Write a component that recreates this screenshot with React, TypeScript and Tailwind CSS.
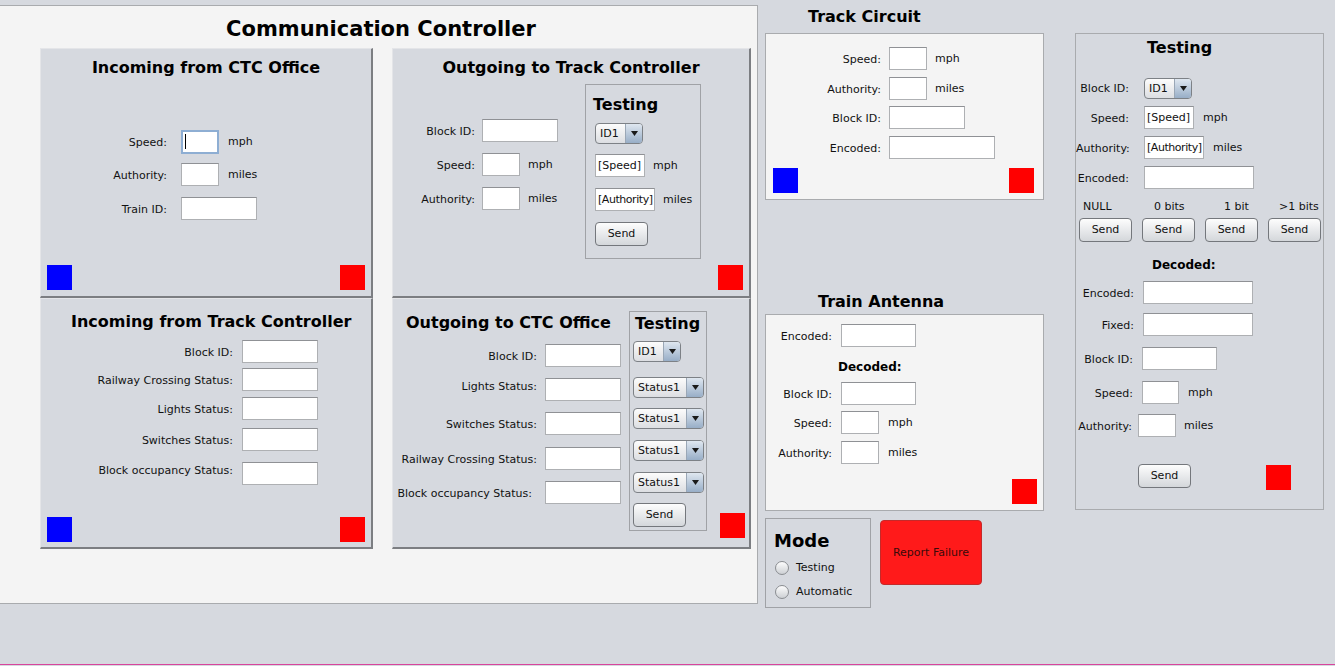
import React from "react";

const TITLE = "font-bold text-[16px] leading-[20px] text-black";
const BEVEL =
  "bg-[#d6d9df] border-t border-l border-t-[#e4e5e8] border-l-[#e4e5e8] border-r-2 border-b-2 border-r-[#7c7e82] border-b-[#7c7e82] flex";

function TextBox({ className = "", children }: { className?: string; children?: React.ReactNode }) {
  return (
    <div
      className={`h-[23px] shrink-0 bg-white border border-[#aeb0b3] border-t-[#8f9195] flex items-center pl-[2px] text-[11px] text-[#111] overflow-hidden whitespace-nowrap ${className}`}
    >
      {children}
    </div>
  );
}

function Focused({ className = "" }: { className?: string }) {
  return (
    <div className={`h-[24px] shrink-0 bg-white border-2 border-[#8eaed3] flex items-center pl-[2px] ${className}`}>
      <div className="w-[1px] h-[15px] bg-black" />
    </div>
  );
}

function Field({
  className = "",
  labelW,
  label,
  inputCls,
  unit,
  unitCls = "",
  value,
  labelCls = "",
  focused = false,
}: {
  className?: string;
  labelW: string;
  label: string;
  inputCls: string;
  unit?: string;
  unitCls?: string;
  value?: React.ReactNode;
  labelCls?: string;
  focused?: boolean;
}) {
  return (
    <div className={`flex items-center h-[23px] shrink-0 ${className}`}>
      <div className={`${labelW} shrink-0 text-right whitespace-nowrap leading-[15px] pt-[1px] ${labelCls}`}>{label}</div>
      {focused ? <Focused className={inputCls} /> : <TextBox className={inputCls}>{value}</TextBox>}
      {unit && <span className={`whitespace-nowrap pt-[1px] ${unitCls}`}>{unit}</span>}
    </div>
  );
}

function Combo({ className = "", label }: { className?: string; label: string }) {
  return (
    <div
      className={`h-[21px] shrink-0 flex rounded-[4px] border border-[#7d8186] overflow-hidden bg-linear-to-b from-[#fcfcfc] to-[#dcdee2] ${className}`}
    >
      <div className="flex-1 flex items-center pl-[4px] text-[11px] whitespace-nowrap">{label}</div>
      <div className="w-[17px] border-l border-[#9aa7b6] bg-linear-to-b from-[#dfe7f0] to-[#98aec7] flex items-center justify-center">
        <svg width="7" height="5" viewBox="0 0 7 5">
          <path d="M0 0h7L3.5 5z" fill="#1a1a1a" />
        </svg>
      </div>
    </div>
  );
}

function Btn({ className = "" }: { className?: string }) {
  return (
    <div
      className={`w-[53px] h-[24px] shrink-0 rounded-[4px] border border-[#74777c] bg-linear-to-b from-[#fdfdfd] to-[#d4d7db] flex items-center justify-center text-[11px] text-[#111] ${className}`}
    >
      Send
    </div>
  );
}

function Sq({ blue = false, className = "" }: { blue?: boolean; className?: string }) {
  return <div className={`w-[25px] h-[25px] shrink-0 ${blue ? "bg-[#0000ff]" : "bg-[#ff0000]"} ${className}`} />;
}

function Radio({ label, className = "" }: { label: string; className?: string }) {
  return (
    <div className={`flex items-center h-[14px] pl-[9px] ${className}`}>
      <div className="w-[14px] h-[14px] rounded-full border border-[#8a8d91] bg-linear-to-b from-[#fdfdfd] to-[#cdd0d4]" />
      <span className="ml-[7px] text-[11px]">{label}</span>
    </div>
  );
}

const AUTH = <span className="tracking-[-0.45px]">[Authority]</span>;

function MainPanel() {
  return (
    <div className="mt-[5px] w-[758px] h-[599px] shrink-0 bg-[#f4f4f4] border-t border-r border-b border-[#a9abae] flex flex-col">
      <div className="pt-[10px] pl-[5px] text-center font-bold text-[21px] leading-[26px] text-black">
        Communication Controller
      </div>
      <div className="mt-[6px] ml-[40px] grid grid-cols-[333px_359px] grid-rows-[250px_251px] gap-x-[19px]">
        {/* Incoming from CTC Office */}
        <div className={`${BEVEL} flex-col`}>
          <div className={`pt-[9px] text-center ${TITLE}`}>Incoming from CTC Office</div>
          <Field className="mt-[52px]" labelW="w-[126px]" label="Speed:" inputCls="ml-[14px] w-[38px]" focused unit="mph" unitCls="ml-[9px]" />
          <Field className="mt-[10px]" labelW="w-[126px]" label="Authority:" inputCls="ml-[14px] w-[38px]" unit="miles" unitCls="ml-[9px]" />
          <Field className="mt-[11px]" labelW="w-[126px]" label="Train ID:" inputCls="ml-[14px] w-[76px]" />
          <div className="mt-auto flex justify-between px-[6px] pb-[6px]">
            <Sq blue />
            <Sq />
          </div>
        </div>

        {/* Outgoing to Track Controller */}
        <div className={`${BEVEL} flex-col`}>
          <div className={`pt-[9px] text-center ${TITLE}`}>Outgoing to Track Controller</div>
          <div className="mt-[6px] flex items-start">
            <div className="w-[192px] shrink-0 flex flex-col">
              <Field className="mt-[35px]" labelW="w-[82px]" label="Block ID:" inputCls="ml-[7px] w-[76px]" />
              <Field className="mt-[11px]" labelW="w-[82px]" label="Speed:" inputCls="ml-[7px] w-[38px]" unit="mph" unitCls="ml-[8px]" />
              <Field className="mt-[11px]" labelW="w-[82px]" label="Authority:" inputCls="ml-[7px] w-[38px]" unit="miles" unitCls="ml-[8px]" />
            </div>
            <div className="w-[116px] h-[175px] shrink-0 border border-[#a0a2a6] flex flex-col">
              <div className={`mt-[10px] pl-[7px] ${TITLE}`}>Testing</div>
              <Combo className="mt-[8px] ml-[9px] w-[48px]" label="ID1" />
              <div className="mt-[10px] ml-[9px] flex items-center">
                <TextBox className="w-[50px]">[Speed]</TextBox>
                <span className="ml-[8px] pt-[1px]">mph</span>
              </div>
              <div className="mt-[11px] ml-[9px] flex items-center">
                <TextBox className="w-[60px] pl-[1px]">{AUTH}</TextBox>
                <span className="ml-[8px] pt-[1px]">miles</span>
              </div>
              <Btn className="mt-[11px] ml-[9px]" />
            </div>
          </div>
          <div className="mt-auto flex justify-end pr-[6px] pb-[6px]">
            <Sq />
          </div>
        </div>

        {/* Incoming from Track Controller */}
        <div className={`${BEVEL} flex-col`}>
          <div className={`pt-[13px] pl-[30px] ${TITLE}`}>Incoming from Track Controller</div>
          <Field className="mt-[8px]" labelW="w-[192px]" label="Block ID:" inputCls="ml-[9px] w-[76px]" />
          <Field className="mt-[5px]" labelW="w-[192px]" label="Railway Crossing Status:" inputCls="ml-[9px] w-[76px]" />
          <Field className="mt-[6px]" labelW="w-[192px]" label="Lights Status:" inputCls="ml-[9px] w-[76px]" />
          <Field className="mt-[8px]" labelW="w-[192px]" label="Switches Status:" inputCls="ml-[9px] w-[76px]" />
          <Field className="mt-[11px]" labelW="w-[192px]" label="Block occupancy Status:" labelCls="self-start" inputCls="ml-[9px] w-[76px]" />
          <div className="mt-auto flex justify-between px-[6px] pb-[5px]">
            <Sq blue />
            <Sq />
          </div>
        </div>

        {/* Outgoing to CTC Office */}
        <div className={`${BEVEL} flex-row`}>
          <div className="w-[236px] shrink-0 flex flex-col">
            <div className={`mt-[14px] pl-[13px] ${TITLE}`}>Outgoing to CTC Office</div>
            <Field className="mt-[11px]" labelW="w-[144px]" label="Block ID:" inputCls="ml-[8px] w-[76px]" />
            <Field className="mt-[11px]" labelW="w-[144px]" label="Lights Status:" labelCls="self-start" inputCls="ml-[8px] w-[76px]" />
            <Field className="mt-[11px]" labelW="w-[144px]" label="Switches Status:" inputCls="ml-[8px] w-[76px]" />
            <Field className="mt-[12px]" labelW="w-[144px]" label="Railway Crossing Status:" inputCls="ml-[8px] w-[76px]" />
            <Field className="mt-[11px]" labelW="w-[144px]" label="Block occupancy Status:" labelCls="pr-[5px]" inputCls="ml-[8px] w-[76px]" />
          </div>
          <div className="mt-[12px] w-[78px] h-[220px] shrink-0 border border-[#a0a2a6] flex flex-col">
            <div className={`mt-[2px] pl-[5px] ${TITLE}`}>Testing</div>
            <Combo className="mt-[7px] ml-[3px] w-[48px]" label="ID1" />
            <Combo className="mt-[15px] ml-[3px] w-[71px]" label="Status1" />
            <Combo className="mt-[10px] ml-[3px] w-[71px]" label="Status1" />
            <Combo className="mt-[11px] ml-[3px] w-[71px]" label="Status1" />
            <Combo className="mt-[11px] ml-[3px] w-[71px]" label="Status1" />
            <Btn className="mt-[10px] ml-[3px]" />
          </div>
          <div className="ml-[13px] self-end mb-[9px]">
            <Sq />
          </div>
        </div>
      </div>
    </div>
  );
}

function ColA() {
  return (
    <div className="ml-[7px] w-[279px] shrink-0 flex flex-col">
      <div className={`pt-[7px] pl-[43px] ${TITLE}`}>Track Circuit</div>
      <div className="mt-[6px] h-[167px] bg-[#f4f4f4] border border-[#a9abae] flex flex-col">
        <Field className="mt-[13px]" labelW="w-[115px]" label="Speed:" inputCls="ml-[8px] w-[38px]" unit="mph" unitCls="ml-[8px]" />
        <Field className="mt-[7px]" labelW="w-[115px]" label="Authority:" inputCls="ml-[8px] w-[38px]" unit="miles" unitCls="ml-[8px]" />
        <Field className="mt-[6px]" labelW="w-[115px]" label="Block ID:" inputCls="ml-[8px] w-[76px]" />
        <Field className="mt-[7px]" labelW="w-[115px]" label="Encoded:" inputCls="ml-[8px] w-[106px]" />
        <div className="mt-auto flex justify-between pl-[7px] pr-[9px] pb-[6px]">
          <Sq blue />
          <Sq />
        </div>
      </div>

      <div className={`mt-[92px] pl-[53px] ${TITLE}`}>Train Antenna</div>
      <div className="mt-[2px] h-[197px] bg-[#f4f4f4] border border-[#a9abae] flex flex-col">
        <Field className="mt-[9px]" labelW="w-[66px]" label="Encoded:" inputCls="ml-[9px] w-[75px]" />
        <div className="mt-[12px] pl-[72px] font-bold text-[12px] leading-[16px] text-black">Decoded:</div>
        <Field className="mt-[7px]" labelW="w-[66px]" label="Block ID:" inputCls="ml-[9px] w-[75px]" />
        <Field className="mt-[6px]" labelW="w-[66px]" label="Speed:" inputCls="ml-[9px] w-[38px]" unit="mph" unitCls="ml-[9px]" />
        <Field className="mt-[7px]" labelW="w-[66px]" label="Authority:" inputCls="ml-[9px] w-[38px]" unit="miles" unitCls="ml-[9px]" />
        <div className="mt-auto flex justify-end pr-[6px] pb-[6px]">
          <Sq />
        </div>
      </div>

      <div className="mt-[7px] flex items-start">
        <div className="w-[106px] h-[90px] shrink-0 border border-[#a0a2a6] flex flex-col">
          <div className="mt-[11px] pl-[8px] font-bold text-[18px] leading-[22px] text-black">Mode</div>
          <Radio className="mt-[9px]" label="Testing" />
          <Radio className="mt-[10px]" label="Automatic" />
        </div>
        <div className="ml-[9px] mt-[2px] w-[102px] h-[65px] shrink-0 rounded-[4px] bg-[#ff1a1a] border border-[#c42a2a] flex items-center justify-center text-[11px] text-[#3a0a0a]">
          Report Failure
        </div>
      </div>
    </div>
  );
}

function ColB() {
  return (
    <div className="mt-[33px] ml-[31px] w-[249px] h-[477px] shrink-0 border border-[#a9abae] flex flex-col">
      <div className={`mt-[4px] pl-[71px] ${TITLE}`}>Testing</div>
      <div className="mt-[20px] flex items-center h-[21px]">
        <div className="w-[53px] text-right whitespace-nowrap pt-[1px]">Block ID:</div>
        <Combo className="ml-[15px] w-[48px]" label="ID1" />
      </div>
      <Field className="mt-[7px]" labelW="w-[53px]" label="Speed:" inputCls="ml-[15px] w-[50px]" value="[Speed]" unit="mph" unitCls="ml-[9px]" />
      <Field className="mt-[7px]" labelW="w-[53px]" label="Authority:" inputCls="ml-[15px] w-[60px] pl-[1px]" value={AUTH} unit="miles" unitCls="ml-[9px]" />
      <Field className="mt-[7px]" labelW="w-[53px]" label="Encoded:" inputCls="ml-[15px] w-[110px]" />
      <div className="mt-[10px] flex leading-[14px] whitespace-nowrap pt-[1px]">
        <div className="w-[78px] pl-[7px]">NULL</div>
        <div className="w-[70px]">0 bits</div>
        <div className="w-[55px]">1 bit</div>
        <div>&gt;1 bits</div>
      </div>
      <div className="mt-[4px] pl-[3px] flex gap-[10px]">
        <Btn />
        <Btn />
        <Btn />
        <Btn />
      </div>
      <div className="mt-[15px] pl-[76px] font-bold text-[12px] leading-[16px] text-black">Decoded:</div>
      <Field className="mt-[8px]" labelW="w-[58px]" label="Encoded:" inputCls="ml-[9px] w-[110px]" />
      <Field className="mt-[9px]" labelW="w-[58px]" label="Fixed:" inputCls="ml-[9px] w-[110px]" />
      <Field className="mt-[11px]" labelW="w-[57px]" label="Block ID:" inputCls="ml-[9px] w-[75px]" />
      <Field className="mt-[11px]" labelW="w-[57px]" label="Speed:" inputCls="ml-[9px] w-[37px]" unit="mph" unitCls="ml-[9px]" />
      <Field className="mt-[10px]" labelW="w-[56px]" label="Authority:" inputCls="ml-[6px] w-[38px]" unit="miles" unitCls="ml-[8px]" />
      <div className="mt-[27px] flex items-start pl-[62px]">
        <Btn />
        <Sq className="ml-[75px] mt-[1px]" />
      </div>
    </div>
  );
}

export default function App() {
  return (
    <div className="w-[1335px] h-[666px] bg-[#d6d9df] overflow-hidden flex flex-col font-['DejaVu_Sans',sans-serif] text-[11px] leading-[14px] text-[#111]">
      <div className="flex items-start flex-1 min-h-0">
        <MainPanel />
        <ColA />
        <ColB />
      </div>
      <div className="h-[1px] bg-[#d8449c]" />
      <div className="h-[1px]" />
    </div>
  );
}
